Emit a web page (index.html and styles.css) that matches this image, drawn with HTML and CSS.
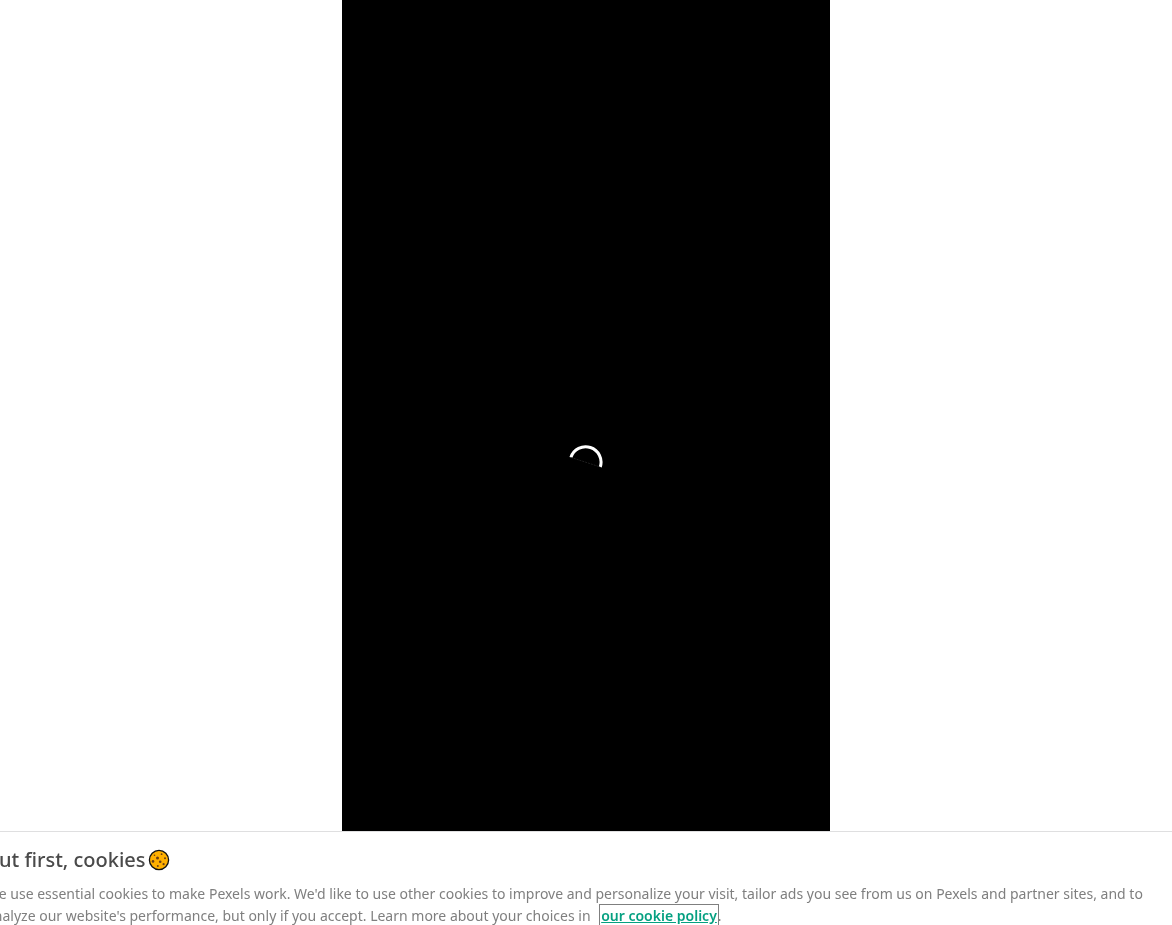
FILE: index.html
```html
<!DOCTYPE html>
<html lang="en">
<head>
<meta charset="utf-8">
<meta name="viewport" content="width=device-width, initial-scale=1">
<title>Pexels</title>
<link rel="stylesheet" href="styles.css">
</head>
<body>
<main class="stage">
  <div class="player">
    <svg class="spinner" viewBox="0 0 38 38" role="img" aria-label="Loading">
      <path d="M3.9 13.4A15.3 15.3 0 0 1 33.3 23" fill="none" stroke="#fff" stroke-width="3"/>
      <path d="M3.9 13.4L33.3 23" stroke="#333" stroke-width=".6" stroke-dasharray="2 1"/>
    </svg>
  </div>
</main>
<section class="banner" aria-label="Cookies">
  <div class="content">
    <h2 class="title">But first, cookies
      <svg class="cookie" viewBox="0 0 22 22" aria-hidden="true">
        <circle cx="11" cy="11" r="9.6" fill="#ffb000" stroke="#111" stroke-width="1.3"/>
        <g fill="#6b3f16">
          <circle cx="9.5" cy="9" r="1.5"/><circle cx="13.6" cy="5.2" r=".9"/>
          <circle cx="6.5" cy="6.2" r=".8"/><circle cx="17" cy="9.3" r="1"/>
          <circle cx="5" cy="12.4" r="1.3"/><circle cx="12.2" cy="12.8" r="1.3"/>
          <circle cx="15.6" cy="15.2" r="1.1"/><circle cx="9.8" cy="17.1" r="1"/>
        </g>
      </svg>
    </h2>
    <p class="text">We use essential cookies to make Pexels work. We'd like to use other cookies to improve and personalize your visit, tailor ads you see from us on Pexels and partner sites, and to<br>analyze our website's performance, but only if you accept. Learn more about your choices in <a class="policy" href="#">our cookie policy</a>.</p>
  </div>
</section>
</body>
</html>
```
FILE: styles.css
```css
body {
  margin: 0;
  background: #fff;
  font-family: "Noto Sans", "Open Sans", sans-serif;
  overflow: hidden;
}

.stage {
  display: flex;
  justify-content: center;
  height: 100vh;
}

.player {
  display: flex;
  align-items: center;
  justify-content: center;
  width: 100%;
  max-width: 488px;
  background: #000;
}

.spinner {
  width: 38px;
  height: 38px;
}

.banner {
  position: fixed;
  right: 0;
  bottom: -2px;
  left: 0;
  border-top: 1px solid #dfdfe0;
  background: #fff;
}

.content {
  margin-left: -14px;
  padding-top: 13px;
}

.title {
  display: flex;
  align-items: center;
  gap: 2px;
  margin: 0 0 8px;
  color: #4a4a4a;
  font-size: 20px;
  font-weight: 500;
  line-height: 30px;
}

.cookie {
  width: 22px;
  height: 22px;
}

.text {
  margin: 0;
  color: #7f7f7f;
  font-size: 14px;
  line-height: 22px;
  white-space: nowrap;
}

.policy {
  margin-left: 6px;
  padding: 1px;
  outline: 1px solid #7f7f7f;
  color: #05a081;
  font-weight: 600;
}
```
